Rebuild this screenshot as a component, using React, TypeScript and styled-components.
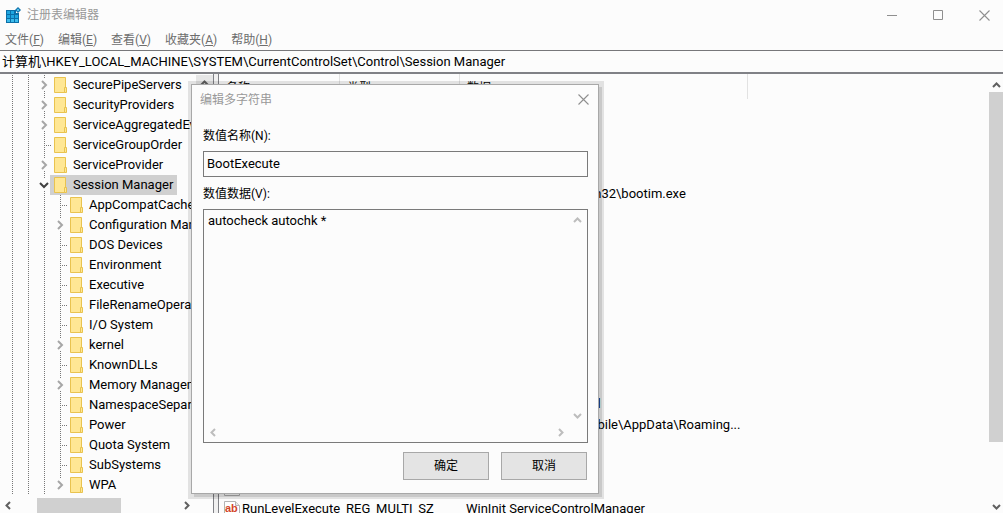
import React from "react";
import styled, { createGlobalStyle } from "styled-components";

const GlobalStyle = createGlobalStyle`
  * { box-sizing: border-box; }
  body {
    margin: 0;
    background: #fcfcfc;
    color: #000;
    font: 13px/20px Roboto, "Noto Sans CJK SC", sans-serif;
    overflow: hidden;
  }
  button, input, textarea { font: inherit; color: inherit; }
`;

const Window = styled.div`
  position: relative;
  display: flex;
  flex-direction: column;
  height: 100vh;
`;

const TitleBar = styled.header`
  display: flex;
  align-items: center;
  height: 30px;
  padding: 0 9px 0 5px;
  flex: none;
  color: #999;
  font-size: 12px;
`;

const AppTitle = styled.h1`
  flex: 1;
  margin: 0 0 0 6px;
  font: inherit;
`;

const WindowControls = styled.div`
  display: flex;
  gap: 26px;
`;

const IconButton = styled.button<{ $width: number }>`
  display: flex;
  align-items: center;
  justify-content: center;
  width: ${(p) => p.$width}px;
  height: 28px;
  padding: 0;
  border: 0;
  background: none;
`;

const MenuBar = styled.nav`
  display: flex;
  flex: none;
  gap: 14px;
  height: 20px;
  padding-left: 5px;
`;

const MenuItem = styled.button`
  padding: 0;
  border: 0;
  background: none;
  color: #6d6d6d;
  font-size: 12px;
  line-height: 20px;
  white-space: nowrap;
`;

const AddressBar = styled.input`
  flex: none;
  width: 100%;
  height: 24px;
  padding: 0 2px 2px;
  border: 0;
  border-top: 1px solid #77777a;
  border-bottom: 2px solid #808186;
  border-radius: 0;
  background: #fcfcfc;
  outline: 0;
`;

const Panes = styled.main`
  display: flex;
  flex: 1;
  min-height: 0;
`;

const TreePane = styled.section`
  display: flex;
  flex: none;
  flex-direction: column;
  width: 214px;
  border-right: 1px solid #808186;
`;

const TreeBody = styled.div`
  display: flex;
  flex: 1;
  min-height: 0;
  padding-top: 1px;
`;

const Tree = styled.ul`
  flex: 1;
  min-width: 0;
  margin: 0;
  padding: 0;
  overflow: hidden;
  list-style: none;
`;

const TreeRow = styled.li`
  display: flex;
  height: 20px;
  padding-left: 4px;
`;

const Guide = styled.svg`
  display: block;
  flex: none;
`;

const TreeLabel = styled.span<{ $selected?: boolean }>`
  display: flex;
  flex: none;
  align-items: center;
  gap: 5px;
  padding: 0 4px;
  margin-left: -2px;
  background: ${(p) => (p.$selected ? "#d0d0d0" : "none")};
  white-space: nowrap;
`;

const Gutter = styled.div`
  flex: none;
  width: 17px;
`;

const ArrowButton = styled.button<{ $size?: number; $shade?: boolean }>`
  display: flex;
  flex: none;
  align-items: center;
  justify-content: center;
  width: ${(p) => p.$size ?? 14}px;
  height: ${(p) => p.$size ?? 14}px;
  padding: 0;
  border: 0;
  background: ${(p) => (p.$shade ? "#e6e6e6" : "none")};
`;

const HorizontalBar = styled.div`
  display: flex;
  align-items: center;
  height: 15px;
  padding: 0 20px 0 1px;
`;

const HorizontalTrack = styled.div`
  flex: 1;
  height: 100%;
  padding-left: 22px;
`;

const HorizontalThumb = styled.div`
  width: 84px;
  height: 100%;
  background: #d0d0d0;
`;

const Splitter = styled.div`
  flex: none;
  width: 5px;
  border-right: 1px solid #808186;
  background: #f0f0f0;
`;

const ListPane = styled.section`
  flex: 1;
  min-width: 0;
  overflow: hidden;
`;

const ValueTable = styled.table`
  width: 529px;
  table-layout: fixed;
  border-collapse: separate;
  border-spacing: 0;
`;

const HeaderCell = styled.th`
  height: 25px;
  padding: 2px 0 0 7px;
  border-right: 1px solid #e2e2e2;
  font-weight: 400;
  font-size: 12px;
  line-height: 20px;
  text-align: left;
`;

const Cell = styled.td<{ $covered?: boolean }>`
  height: 21px;
  padding: 0 0 0 ${(p) => (p.$covered ? 130 : 6)}px;
  line-height: 20px;
  white-space: nowrap;
`;

const NameCell = styled.div`
  display: flex;
  align-items: center;
  gap: 2px;
  height: 20px;
  margin-left: -1px;
`;

const VerticalBar = styled.div`
  display: flex;
  flex: none;
  flex-direction: column;
  align-items: center;
  width: 14px;
  padding-top: 4px;
`;

const VerticalTrack = styled.div`
  flex: 1;
  width: 100%;
`;

const VerticalThumb = styled.div`
  height: 86%;
  background: #d0d0d0;
`;

const Dialog = styled.form`
  position: absolute;
  top: 84px;
  left: 191px;
  width: 408px;
  border: 1px solid #a8a8a8;
  background: #fcfcfc;
  box-shadow: 3px 3px 0 0 rgba(0, 0, 0, 0.11), 1px 1px 0 4px rgba(0, 0, 0, 0.1);
`;

const DialogTitle = styled.div`
  display: flex;
  align-items: center;
  height: 29px;
  padding-left: 8px;
  color: #999;
  font-size: 12px;
`;

const DialogName = styled.h2`
  flex: 1;
  margin: 0;
  font: inherit;
`;

const DialogBody = styled.div`
  display: flex;
  flex-direction: column;
  gap: 5px;
  padding: 10px 10px 13px 11px;
`;

const FieldLabel = styled.label`
  padding-top: 2px;
  font-size: 12px;
  line-height: 20px;
`;

const TextField = styled.input`
  width: 100%;
  height: 26px;
  padding: 0 3px 2px;
  border: 1px solid #7a7a7a;
  border-radius: 0;
  background: #fcfcfc;
  outline: 0;
`;

const DataBox = styled.div`
  display: grid;
  grid-template-columns: 1fr 20px;
  grid-template-rows: 1fr 20px;
  height: 234px;
  border: 1px solid #7a7a7a;
`;

const DataArea = styled.textarea`
  padding: 1px 4px;
  border: 0;
  background: none;
  line-height: 20px;
  outline: 0;
  resize: none;
  overflow: hidden;
`;

const ArrowPair = styled.div<{ $vertical?: boolean }>`
  display: flex;
  flex-direction: ${(p) => (p.$vertical ? "column" : "row")};
  align-items: center;
  justify-content: space-between;
  padding: ${(p) => (p.$vertical ? "3px 0 0" : "0 0 0 2px")};
`;

const Actions = styled.div`
  display: flex;
  justify-content: flex-end;
  gap: 12px;
  padding: 4px 1px 0 0;
`;

const PushButton = styled.button`
  width: 86px;
  height: 28px;
  padding: 0;
  border: 1px solid #a8a8a8;
  background: #e4e4e4;
  font-size: 12px;
`;

type Direction = "up" | "down" | "left" | "right";

const arrowPaths: Record<Direction, string> = {
  up: "M1 6 4.500 2.500 8 6",
  down: "M1 3 4.500 6.500 8 3",
  left: "M6 1 2.500 4.500 6 8",
  right: "M3 1 6.500 4.500 3 8",
};

function Arrow({ dir, color = "#606060" }: { dir: Direction; color?: string }) {
  return (
    <svg width="9" height="9" viewBox="0 0 9 9" fill="none" stroke={color} strokeWidth="2">
      <path d={arrowPaths[dir]} />
    </svg>
  );
}

function CloseGlyph() {
  return (
    <svg width="11" height="11" viewBox="0 0 11 11" stroke="#8f8f8f" strokeWidth="1.100">
      <path d="M.5.5l10 10M10.500.5l-10 10" />
    </svg>
  );
}

function RegistryIcon() {
  return (
    <svg width="16" height="16" viewBox="0 0 16 16">
      <path fill="#0b6fa8" d="M1 3h10v3h3v10H1z" />
      <path fill="#1fa6e0" d="M2 4h3v3H2zM6 4h3v3H6zM2 8h3v3H2zM6 8h3v3H6zM10 8h3v3h-3z" />
      <path fill="#3dbcec" d="M2 12h3v3H2zM6 12h3v3H6zM10 12h3v3h-3z" />
      <path fill="#0b6fa8" d="M13 0l3 3-3 3-3-3z" />
      <path fill="#5cc9f2" d="M13 1.500l1.500 1.500L13 4.500 11.500 3z" />
    </svg>
  );
}

function FolderIcon() {
  return (
    <svg width="14" height="16" viewBox="0 0 14 16">
      <path fill="#ffe794" stroke="#e9c34f" d="M.5.500h11v15H.5z" />
      <path fill="#ffe794" stroke="#e9c34f" d="M10.500 10.500h2v5h-2z" />
    </svg>
  );
}

const ValueGlyph = styled.svg`
  flex: none;
`;

function StringIcon() {
  return (
    <ValueGlyph width="16" height="16" viewBox="0 0 16 16">
      <path fill="#fff" stroke="#b4b4b4" d="M.5.500h11l4 4v11H.5z" />
      <path fill="#e8e8e8" stroke="#b4b4b4" d="M11.500.500v4h4" />
      <text x="1" y="11" fill="#d2452a" fontFamily="Liberation Sans" fontWeight="700" fontSize="11">
        ab
      </text>
    </ValueGlyph>
  );
}

interface KeyNode {
  name: string;
  depth: 0 | 1;
  state: "leaf" | "closed" | "open";
  last?: boolean;
}

function key(name: string, depth: 0 | 1, state: KeyNode["state"] = "leaf", last = false): KeyNode {
  return { name, depth, state, last };
}

const keys: KeyNode[] = [
  key("SecurePipeServers", 0, "closed"),
  key("SecurityProviders", 0, "closed"),
  key("ServiceAggregatedEvents", 0, "closed"),
  key("ServiceGroupOrder", 0),
  key("ServiceProvider", 0, "closed"),
  key("Session Manager", 0, "open"),
  key("AppCompatCache", 1),
  key("Configuration Manager", 1, "closed"),
  key("DOS Devices", 1),
  key("Environment", 1),
  key("Executive", 1),
  key("FileRenameOperations", 1),
  key("I/O System", 1),
  key("kernel", 1, "closed"),
  key("KnownDLLs", 1),
  key("Memory Management", 1, "closed"),
  key("NamespaceSeparation", 1),
  key("Power", 1),
  key("Quota System", 1),
  key("SubSystems", 1),
  key("WPA", 1, "closed", true),
];

/* Dotted connectors and the expander in front of one tree key. */
function TreeGuide({ node }: { node: KeyNode }) {
  const x = node.depth === 0 ? 40 : 56;
  const through = node.depth === 0 ? [8, 24] : [8, 24, 40];
  const width = x + 8;
  return (
    <Guide width={width} height="20" viewBox={`0 0 ${width} 20`} fill="none">
      <g stroke="#777" strokeDasharray="1 1">
        {through.map((t) => (
          <path key={t} d={`M${t + 0.5} 0v20`} />
        ))}
        {node.state === "leaf" ? (
          <path d={`M${x + 0.5} 0v20M${x + 2} 10.500h6`} />
        ) : (
          <path d={`M${x + 0.5} 0v4${node.last ? "" : `M${x + 0.5} 16v4`}`} />
        )}
      </g>
      {node.state === "closed" && (
        <path stroke="#a6a6a6" strokeWidth="2" d={`M${x - 2} 6l4 4-4 4`} />
      )}
      {node.state === "open" && (
        <path stroke="#404040" strokeWidth="2" d={`M${x - 4} 8l4 4 4-4`} />
      )}
    </Guide>
  );
}

interface ValueRow {
  name?: string;
  type?: string;
  data?: string;
  covered?: boolean;
  icon?: boolean;
}

const rows: ValueRow[] = Array.from({ length: 20 }, () => ({}));
rows[4] = { data: "m32\\bootim.exe", covered: true };
rows[14] = { data: "ol", covered: true };
rows[15] = { data: "obile\\AppData\\Roaming...", covered: true };
rows[18] = { icon: true, type: "REG_SZ" };
rows[19] = {
  icon: true,
  name: "RunLevelExecute",
  type: "REG_MULTI_SZ",
  data: "WinInit ServiceControlManager",
};

const menus: [string, string][] = [
  ["文件", "F"],
  ["编辑", "E"],
  ["查看", "V"],
  ["收藏夹", "A"],
  ["帮助", "H"],
];

export default function App() {
  return (
    <>
      <GlobalStyle />
      <Window>
        <TitleBar>
          <RegistryIcon />
          <AppTitle>注册表编辑器</AppTitle>
          <WindowControls>
            <IconButton $width={20} aria-label="最小化">
              <svg width="10" height="11" stroke="#8f8f8f">
                <path d="M0 5.500h10" />
              </svg>
            </IconButton>
            <IconButton $width={20} aria-label="最大化">
              <svg width="10" height="10" fill="none" stroke="#8f8f8f">
                <path d="M.5.500h9v9h-9z" />
              </svg>
            </IconButton>
            <IconButton $width={20} aria-label="关闭">
              <CloseGlyph />
            </IconButton>
          </WindowControls>
        </TitleBar>
        <MenuBar>
          {menus.map(([label, letter]) => (
            <MenuItem key={letter}>
              {label}(<u>{letter}</u>)
            </MenuItem>
          ))}
        </MenuBar>
        <AddressBar
          aria-label="地址"
          defaultValue={"计算机\\HKEY_LOCAL_MACHINE\\SYSTEM\\CurrentControlSet\\Control\\Session Manager"}
        />
        <Panes>
          <TreePane>
            <TreeBody>
              <Tree>
                {keys.map((node) => (
                  <TreeRow key={node.name}>
                    <TreeGuide node={node} />
                    <TreeLabel $selected={node.state === "open"}>
                      <FolderIcon />
                      {node.name}
                    </TreeLabel>
                  </TreeRow>
                ))}
              </Tree>
              <Gutter>
                <ArrowButton $size={17} $shade aria-label="向上滚动">
                  <Arrow dir="up" />
                </ArrowButton>
              </Gutter>
            </TreeBody>
            <HorizontalBar>
              <ArrowButton aria-label="向左滚动">
                <Arrow dir="left" />
              </ArrowButton>
              <HorizontalTrack>
                <HorizontalThumb />
              </HorizontalTrack>
              <ArrowButton aria-label="向右滚动">
                <Arrow dir="right" />
              </ArrowButton>
            </HorizontalBar>
          </TreePane>
          <Splitter />
          <ListPane>
            <ValueTable>
              <colgroup>
                <col width="121" />
                <col width="120" />
                <col width="288" />
              </colgroup>
              <thead>
                <tr>
                  <HeaderCell>名称</HeaderCell>
                  <HeaderCell>类型</HeaderCell>
                  <HeaderCell>数据</HeaderCell>
                </tr>
              </thead>
              <tbody>
                {rows.map((row, i) => (
                  <tr key={i}>
                    <Cell>
                      {row.icon && (
                        <NameCell>
                          <StringIcon />
                          {row.name}
                        </NameCell>
                      )}
                    </Cell>
                    <Cell>{row.type}</Cell>
                    <Cell $covered={row.covered}>{row.data}</Cell>
                  </tr>
                ))}
              </tbody>
            </ValueTable>
          </ListPane>
          <VerticalBar>
            <ArrowButton aria-label="向上滚动">
              <Arrow dir="up" />
            </ArrowButton>
            <VerticalTrack>
              <VerticalThumb />
            </VerticalTrack>
            <ArrowButton aria-label="向下滚动">
              <Arrow dir="down" />
            </ArrowButton>
          </VerticalBar>
        </Panes>
        <Dialog role="dialog" aria-labelledby="dialog-title" onSubmit={(e) => e.preventDefault()}>
          <DialogTitle>
            <DialogName id="dialog-title">编辑多字符串</DialogName>
            <IconButton type="button" $width={30} aria-label="关闭">
              <CloseGlyph />
            </IconButton>
          </DialogTitle>
          <DialogBody>
            <FieldLabel htmlFor="value-name">数值名称(N):</FieldLabel>
            <TextField id="value-name" readOnly value="BootExecute" />
            <FieldLabel htmlFor="value-data">数值数据(V):</FieldLabel>
            <DataBox>
              <DataArea id="value-data" spellCheck={false} defaultValue="autocheck autochk *" />
              <ArrowPair $vertical>
                <ArrowButton type="button" aria-label="向上滚动">
                  <Arrow dir="up" color="#bdbdbd" />
                </ArrowButton>
                <ArrowButton type="button" aria-label="向下滚动">
                  <Arrow dir="down" color="#bdbdbd" />
                </ArrowButton>
              </ArrowPair>
              <ArrowPair>
                <ArrowButton type="button" aria-label="向左滚动">
                  <Arrow dir="left" color="#bdbdbd" />
                </ArrowButton>
                <ArrowButton type="button" aria-label="向右滚动">
                  <Arrow dir="right" color="#bdbdbd" />
                </ArrowButton>
              </ArrowPair>
            </DataBox>
            <Actions>
              <PushButton type="submit">确定</PushButton>
              <PushButton type="button">取消</PushButton>
            </Actions>
          </DialogBody>
        </Dialog>
      </Window>
    </>
  );
}
